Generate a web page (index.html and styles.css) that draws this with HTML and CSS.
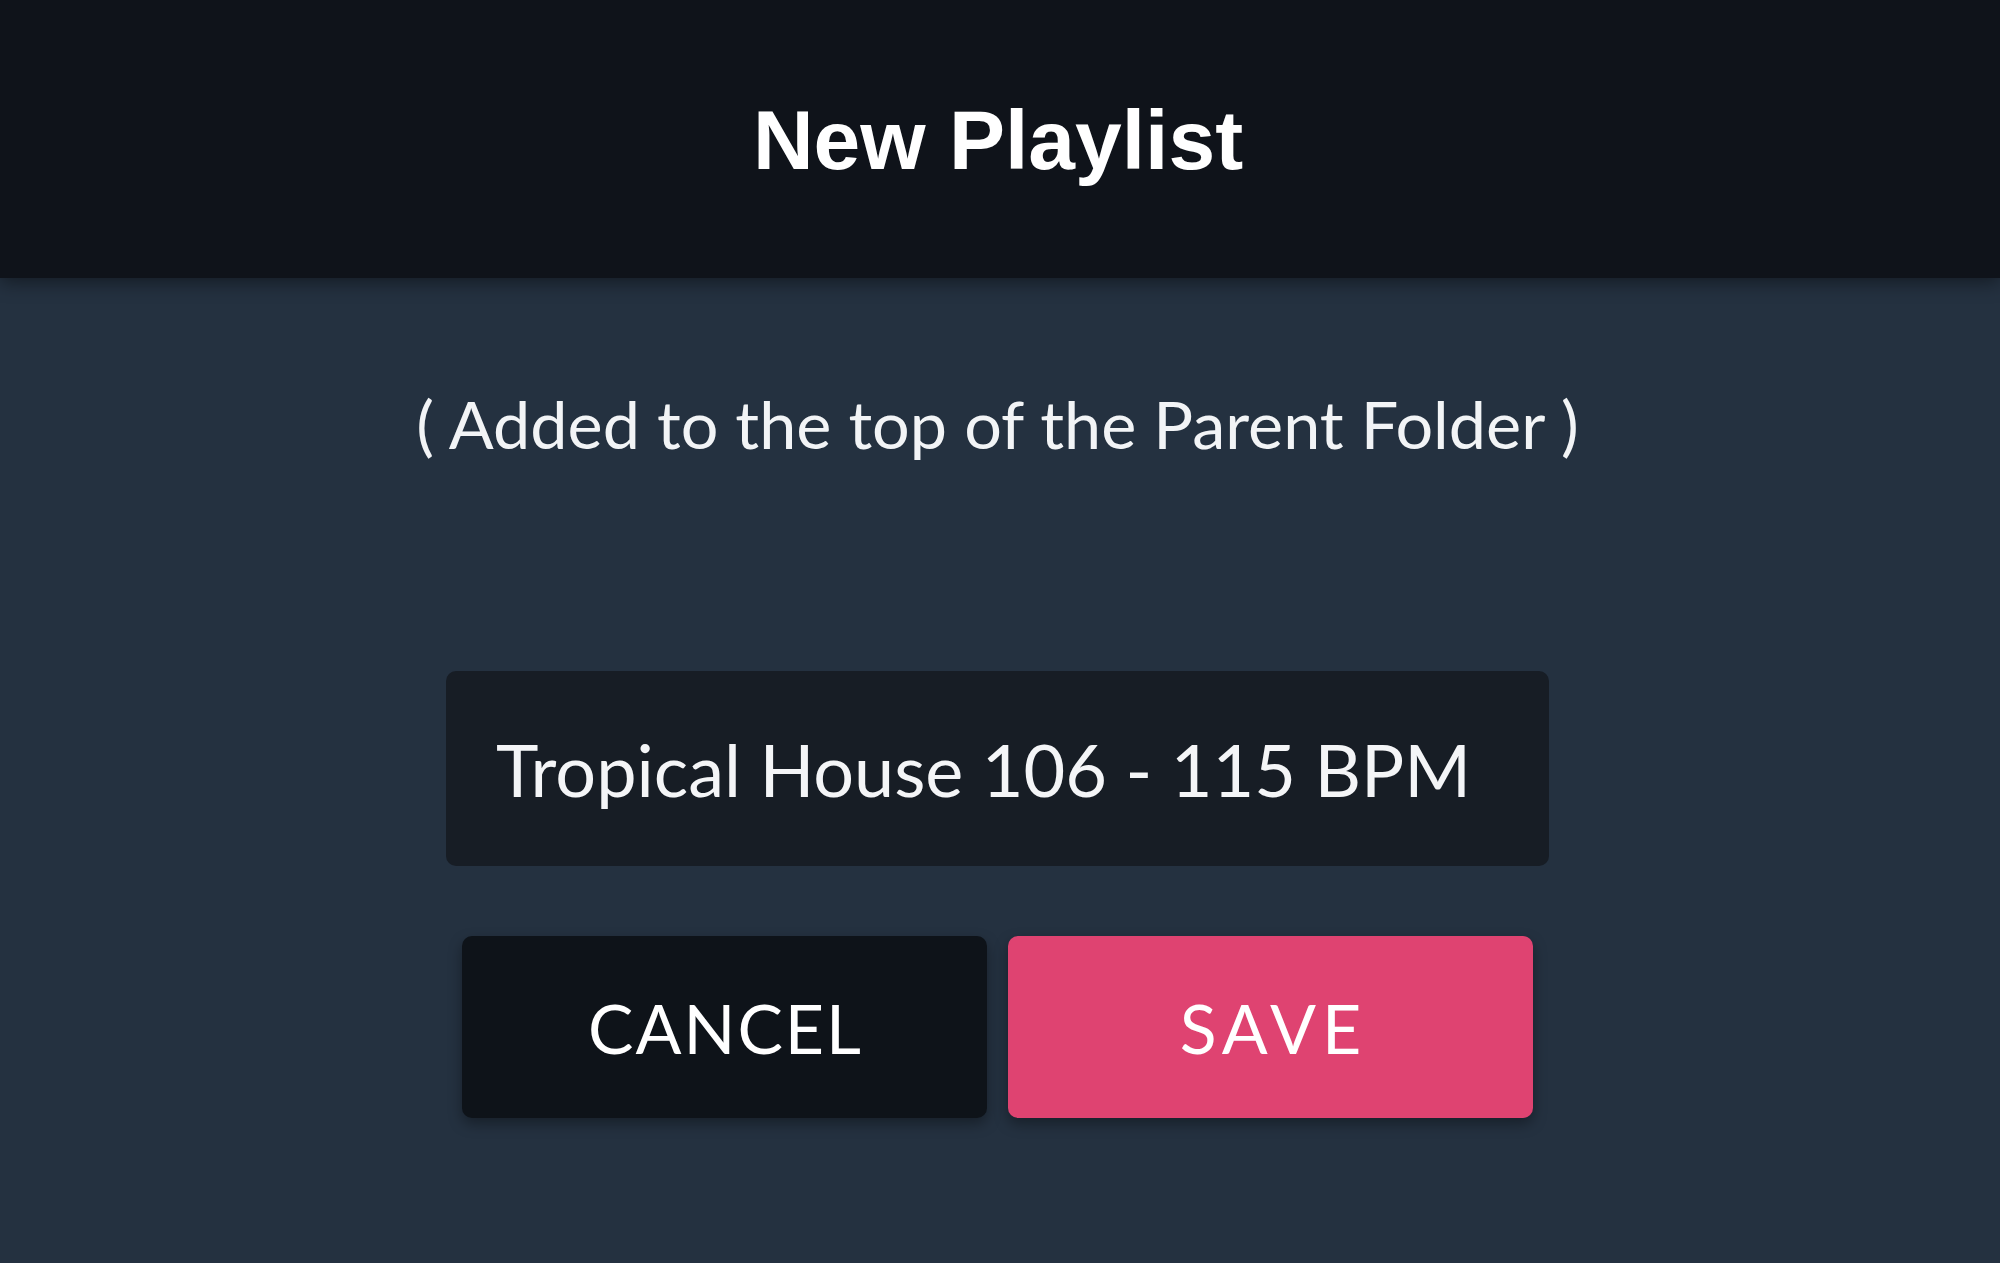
FILE: index.html
```html
<!DOCTYPE html>
<html lang="en">
<head>
<meta charset="utf-8">
<title>New Playlist</title>
<link rel="stylesheet" href="styles.css">
</head>
<body>
<div class="screen">
  <header class="topbar">
    <h1 class="title">New Playlist</h1>
  </header>
  <main class="content">
    <p class="hint">( Added to the top of the Parent Folder )</p>
    <div class="field">
      <span class="field-text">Tropical House 106 - 115 BPM</span>
    </div>
    <div class="actions">
      <button class="btn btn-cancel" type="button">CANCEL</button>
      <button class="btn btn-save" type="button">SAVE</button>
    </div>
  </main>
</div>
</body>
</html>
```

FILE: styles.css
```css
html, body {
  margin: 0;
  padding: 0;
  height: 100%;
}

body {
  background: #243140;
  color: #ffffff;
  font-family: "Lato", "Liberation Sans", sans-serif;
}

.screen {
  display: flex;
  flex-direction: column;
  min-height: 100vh;
}

.topbar {
  height: 278px;
  background: #0f131a;
  display: flex;
  align-items: center;
  justify-content: center;
  box-shadow: 0 4px 18px rgba(0, 0, 0, 0.45);
  position: relative;
  z-index: 1;
}

.title {
  margin: 0;
  font-family: "Liberation Sans", "Roboto", sans-serif;
  font-weight: 700;
  font-size: 84px;
  line-height: 1;
  padding-top: 2px;
  padding-right: 4px;
}

.content {
  display: flex;
  flex-direction: column;
  align-items: center;
  padding-right: 5px;
}

.hint {
  margin: 106px 0 0;
  font-size: 66.5px;
  line-height: 78px;
  color: #f2f4f6;
}

.field {
  margin-top: 209px;
  width: 1103px;
  height: 195px;
  box-sizing: border-box;
  background: #171d25;
  border-radius: 10px;
  display: flex;
  align-items: center;
  padding-left: 50px;
}

.field-text {
  font-size: 72px;
  line-height: 1;
  color: #f4f5f7;
}

.actions {
  margin-top: 70px;
  display: flex;
  gap: 21px;
}

.btn {
  width: 525px;
  height: 182px;
  border: none;
  border-radius: 10px;
  font-family: "Lato", "Liberation Sans", sans-serif;
  font-size: 68px;
  font-weight: 400;
  color: #ffffff;
  box-shadow: 0 6px 14px rgba(0, 0, 0, 0.35);
  padding: 0;
  cursor: pointer;
}

.btn-cancel {
  background: #0e1319;
  letter-spacing: 2px;
  text-indent: 2px;
}

.btn-save {
  background: #df4371;
  letter-spacing: 6px;
  text-indent: 6px;
}
```
